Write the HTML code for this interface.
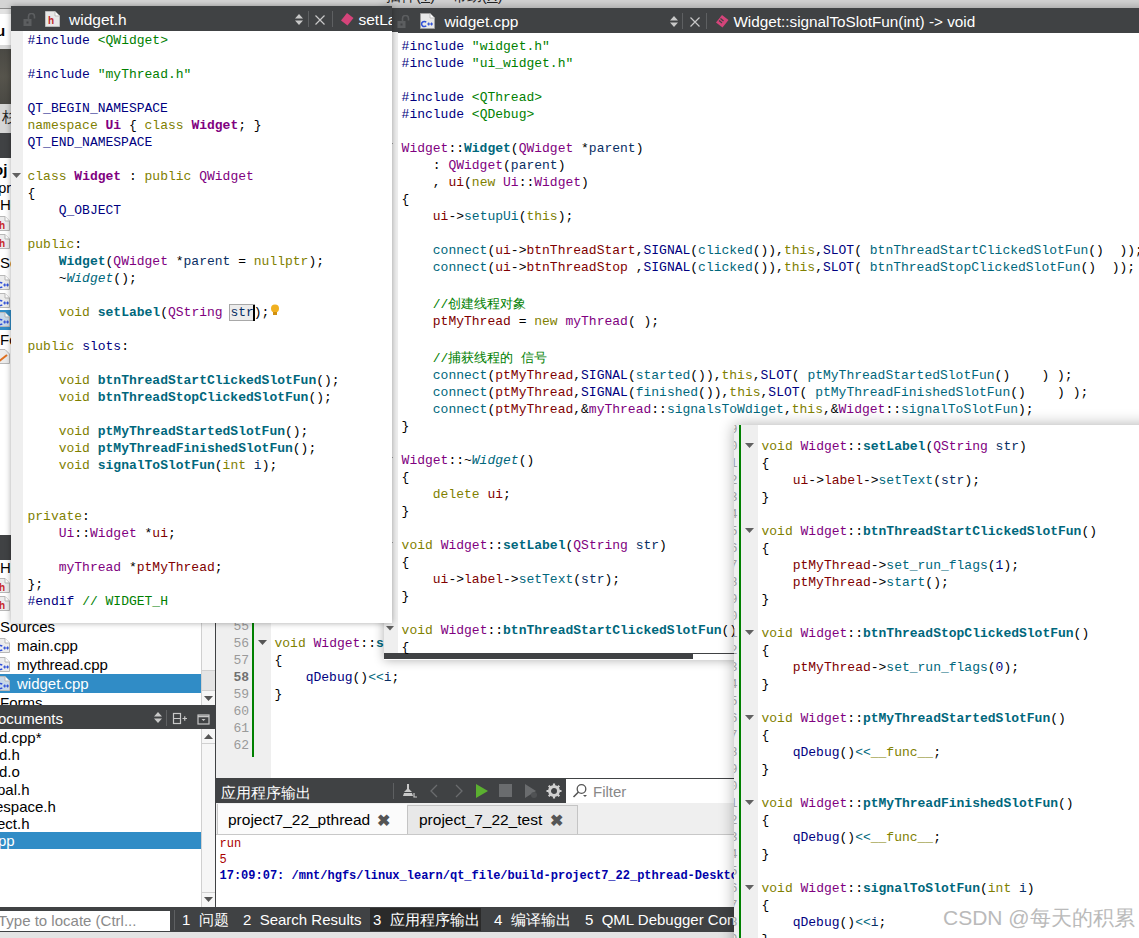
<!DOCTYPE html>
<html><head><meta charset="utf-8">
<style>
*{margin:0;padding:0;box-sizing:border-box}
html,body{width:1139px;height:938px;overflow:hidden;background:#fff}
body{position:relative;font-family:"Liberation Sans",sans-serif}
.a{position:absolute}
.code{font-family:"Liberation Mono",monospace;font-size:13px;line-height:17px;color:#000}
.code div{height:17px;white-space:pre}
.code div.cj{height:20px;padding-top:3px}
.pp{color:#000080}.s{color:#008000}.k{color:#808000}.t{color:#800080}.tb{color:#800080;font-weight:bold}
.f{color:#00677c}.fb{color:#00677c;font-weight:bold}.fi{color:#00677c;font-style:italic}
.m{color:#800000}.v{color:#092e64}.c{color:#008000}
.ui{font-family:"Liberation Sans",sans-serif;white-space:nowrap}
.title{background:#404244;color:#fff;font-size:15px}
.sh{box-shadow:0 0 6px rgba(0,0,0,.35)}
</style></head><body>
<!-- ============ BACKGROUND QT CREATOR ============ -->
<div class="a" id="bg" style="left:0;top:0;width:1139px;height:938px;background:#fff">
<div class="a" style="left:0;top:0;width:1139px;height:9px;background:#d4d4d4"></div>
<div class="a ui" style="left:386px;top:-13px;font-size:15px;line-height:18px;color:#222">插件(<u>T</u>)&nbsp;&nbsp;&nbsp;&nbsp;帮助(<u>H</u>)</div>
<div class="a" style="left:0;top:8px;width:11px;height:1px;background:#8a8a8a"></div><div class="a" style="left:0;top:9px;width:11px;height:5px;background:#e2e2e2"></div>
<div class="a ui" style="left:-4px;top:22px;font-size:15px;line-height:18px;color:#000;font-weight:bold">u</div>
<div class="a" style="left:0;top:45px;width:11px;height:4px;background:#d8d8d8"></div>
<div class="a" style="left:0;top:49px;width:11px;height:55px;background:linear-gradient(#4a4944,#56544c 50%,#4a4944)"></div>
<div class="a" style="left:0;top:104px;width:11px;height:29px;background:#d6d6d6"></div>
<div class="a ui" style="left:2px;top:108px;font-size:15px;line-height:18px;color:#222;">杉</div>
<div class="a" style="left:0;top:133px;width:11px;height:25px;background:#404244"></div>
<div class="a ui" style="left:-6px;top:161px;font-size:15px;line-height:18px;color:#000;font-weight:bold">oj</div>
<div class="a ui" style="left:-2px;top:179px;font-size:15px;line-height:18px;color:#000;">pr</div>
<div class="a ui" style="left:0px;top:196px;font-size:15px;line-height:18px;color:#000;">He</div>
<svg class="a" style="left:-4px;top:216px" width="14" height="15" viewBox="0 0 14 15"><path d="M0.5 0.5 H9 L13.5 5 V14.5 H0.5 Z" fill="#ececec" stroke="#b8b8b8"/><path d="M9 0.5 V5 H13.5" fill="#fff" stroke="#b8b8b8"/><text x="3" y="12.5" font-family="Liberation Sans" font-weight="bold" font-size="10" fill="#c8282d">h</text></svg>
<svg class="a" style="left:-4px;top:234px" width="14" height="15" viewBox="0 0 14 15"><path d="M0.5 0.5 H9 L13.5 5 V14.5 H0.5 Z" fill="#ececec" stroke="#b8b8b8"/><path d="M9 0.5 V5 H13.5" fill="#fff" stroke="#b8b8b8"/><text x="3" y="12.5" font-family="Liberation Sans" font-weight="bold" font-size="10" fill="#c8282d">h</text></svg>
<div class="a ui" style="left:0px;top:254px;font-size:15px;line-height:18px;color:#000;">So</div>
<svg class="a" style="left:-4px;top:275px" width="14" height="15" viewBox="0 0 14 15"><path d="M0.5 0.5 H9 L13.5 5 V14.5 H0.5 Z" fill="#ececec" stroke="#b8b8b8"/><path d="M9 0.5 V5 H13.5" fill="#fff" stroke="#b8b8b8"/><path d="M6.2 8.3 A2.6 2.6 0 1 0 6.2 11.7" fill="none" stroke="#3050d8" stroke-width="1.5"/><path d="M7.2 10 H10.2 M8.7 8.5 V11.5 M10.2 10 H13 M11.6 8.5 V11.5" stroke="#3050d8" stroke-width="1.1"/></svg>
<svg class="a" style="left:-4px;top:293px" width="14" height="15" viewBox="0 0 14 15"><path d="M0.5 0.5 H9 L13.5 5 V14.5 H0.5 Z" fill="#ececec" stroke="#b8b8b8"/><path d="M9 0.5 V5 H13.5" fill="#fff" stroke="#b8b8b8"/><path d="M6.2 8.3 A2.6 2.6 0 1 0 6.2 11.7" fill="none" stroke="#3050d8" stroke-width="1.5"/><path d="M7.2 10 H10.2 M8.7 8.5 V11.5 M10.2 10 H13 M11.6 8.5 V11.5" stroke="#3050d8" stroke-width="1.1"/></svg>
<div class="a" style="left:0;top:310px;width:11px;height:20px;background:#308cc6"></div>
<svg class="a" style="left:-4px;top:312px" width="14" height="15" viewBox="0 0 14 15"><path d="M0.5 0.5 H9 L13.5 5 V14.5 H0.5 Z" fill="#c8d8e8" stroke="#b8b8b8"/><path d="M9 0.5 V5 H13.5" fill="#fff" stroke="#b8b8b8"/><path d="M6.2 8.3 A2.6 2.6 0 1 0 6.2 11.7" fill="none" stroke="#3050d8" stroke-width="1.5"/><path d="M7.2 10 H10.2 M8.7 8.5 V11.5 M10.2 10 H13 M11.6 8.5 V11.5" stroke="#3050d8" stroke-width="1.1"/></svg>
<div class="a ui" style="left:0px;top:331px;font-size:15px;line-height:18px;color:#000;">Fo</div>
<svg class="a" style="left:-4px;top:349px" width="14" height="15" viewBox="0 0 14 15"><path d="M0.5 0.5 H9 L13.5 5 V14.5 H0.5 Z" fill="#ececec" stroke="#b8b8b8"/><path d="M2 13 L11 6" stroke="#e07020" stroke-width="2"/></svg>
<div class="a" style="left:0;top:535px;width:11px;height:25px;background:#404244"></div>
<div class="a ui" style="left:0px;top:559px;font-size:15px;line-height:18px;color:#000;">He</div>
<svg class="a" style="left:-4px;top:578px" width="14" height="15" viewBox="0 0 14 15"><path d="M0.5 0.5 H9 L13.5 5 V14.5 H0.5 Z" fill="#ececec" stroke="#b8b8b8"/><path d="M9 0.5 V5 H13.5" fill="#fff" stroke="#b8b8b8"/><text x="3" y="12.5" font-family="Liberation Sans" font-weight="bold" font-size="10" fill="#c8282d">h</text></svg>
<svg class="a" style="left:-4px;top:596px" width="14" height="15" viewBox="0 0 14 15"><path d="M0.5 0.5 H9 L13.5 5 V14.5 H0.5 Z" fill="#ececec" stroke="#b8b8b8"/><path d="M9 0.5 V5 H13.5" fill="#fff" stroke="#b8b8b8"/><text x="3" y="12.5" font-family="Liberation Sans" font-weight="bold" font-size="10" fill="#c8282d">h</text></svg>
<div class="a ui" style="left:0px;top:618px;font-size:15px;line-height:18px;color:#000;">Sources</div>
<svg class="a" style="left:-4px;top:638px" width="14" height="15" viewBox="0 0 14 15"><path d="M0.5 0.5 H9 L13.5 5 V14.5 H0.5 Z" fill="#ececec" stroke="#b8b8b8"/><path d="M9 0.5 V5 H13.5" fill="#fff" stroke="#b8b8b8"/><path d="M6.2 8.3 A2.6 2.6 0 1 0 6.2 11.7" fill="none" stroke="#3050d8" stroke-width="1.5"/><path d="M7.2 10 H10.2 M8.7 8.5 V11.5 M10.2 10 H13 M11.6 8.5 V11.5" stroke="#3050d8" stroke-width="1.1"/></svg>
<div class="a ui" style="left:17px;top:637px;font-size:15px;line-height:18px;color:#000;">main.cpp</div>
<svg class="a" style="left:-4px;top:657px" width="14" height="15" viewBox="0 0 14 15"><path d="M0.5 0.5 H9 L13.5 5 V14.5 H0.5 Z" fill="#ececec" stroke="#b8b8b8"/><path d="M9 0.5 V5 H13.5" fill="#fff" stroke="#b8b8b8"/><path d="M6.2 8.3 A2.6 2.6 0 1 0 6.2 11.7" fill="none" stroke="#3050d8" stroke-width="1.5"/><path d="M7.2 10 H10.2 M8.7 8.5 V11.5 M10.2 10 H13 M11.6 8.5 V11.5" stroke="#3050d8" stroke-width="1.1"/></svg>
<div class="a ui" style="left:17px;top:656px;font-size:15px;line-height:18px;color:#000;">mythread.cpp</div>
<div class="a" style="left:0;top:674px;width:201px;height:19px;background:#308cc6"></div>
<svg class="a" style="left:-4px;top:676px" width="14" height="15" viewBox="0 0 14 15"><path d="M0.5 0.5 H9 L13.5 5 V14.5 H0.5 Z" fill="#c8d8e8" stroke="#b8b8b8"/><path d="M9 0.5 V5 H13.5" fill="#fff" stroke="#b8b8b8"/><path d="M6.2 8.3 A2.6 2.6 0 1 0 6.2 11.7" fill="none" stroke="#3050d8" stroke-width="1.5"/><path d="M7.2 10 H10.2 M8.7 8.5 V11.5 M10.2 10 H13 M11.6 8.5 V11.5" stroke="#3050d8" stroke-width="1.1"/></svg>
<div class="a ui" style="left:17px;top:675px;font-size:15px;line-height:18px;color:#fff;">widget.cpp</div>
<div class="a ui" style="left:0px;top:694px;font-size:15px;line-height:18px;color:#000;">Forms</div>
<div class="a" style="left:201px;top:617px;width:14px;height:88px;background:#f6f6f6;border-left:1px solid #d0d0d0"></div>
<div class="a" style="left:202px;top:670px;width:13px;height:21px;background:#e4e4e4;border-top:1px solid #d0d0d0;border-bottom:1px solid #d0d0d0"></div>
<svg class="a" style="left:204px;top:696px" width="9" height="5"><path d="M0 0 H9 L4.5 5 Z" fill="#555"/></svg>
<div class="a" style="left:0;top:705px;width:215px;height:24px;background:#404244"></div>
<div class="a ui" style="left:-2px;top:710px;font-size:15px;line-height:18px;color:#fff;">ocuments</div>
<svg class="a" style="left:154px;top:712px" width="8" height="11" viewBox="0 0 8 11"><path d="M0 4.5 L4 0 L8 4.5 Z M0 6.5 L4 11 L8 6.5 Z" fill="#c8c8c8"/></svg>
<div class="a" style="left:166px;top:710px;width:1px;height:16px;background:#5e6062"></div>
<svg class="a" style="left:172px;top:712px" width="16" height="13" viewBox="0 0 16 13"><rect x="1.5" y="1.5" width="7" height="10" fill="none" stroke="#c8c8c8" stroke-width="1.2"/><path d="M1.5 6.5 H8.5 M10.5 6.5 H15 M12.75 4.25 V8.75" stroke="#c8c8c8" stroke-width="1.2"/></svg>
<svg class="a" style="left:197px;top:714px" width="13" height="11" viewBox="0 0 13 11"><rect x="1" y="1" width="11" height="9" fill="none" stroke="#c8c8c8" stroke-width="1.2"/><path d="M1 2.5 H12" stroke="#c8c8c8" stroke-width="1.5"/><path d="M4.5 5 H8.5 L6.5 7 Z" fill="#c8c8c8"/></svg>
<div class="a ui" style="left:-1px;top:729px;font-size:15px;line-height:18px;color:#000;">d.cpp*</div>
<div class="a ui" style="left:-1px;top:746px;font-size:15px;line-height:18px;color:#000;">d.h</div>
<div class="a ui" style="left:-1px;top:763px;font-size:15px;line-height:18px;color:#000;">d.o</div>
<div class="a ui" style="left:-3px;top:781px;font-size:15px;line-height:18px;color:#000;">pal.h</div>
<div class="a ui" style="left:-5px;top:798px;font-size:15px;line-height:18px;color:#000;">espace.h</div>
<div class="a ui" style="left:-3px;top:815px;font-size:15px;line-height:18px;color:#000;">ect.h</div>
<div class="a" style="left:0;top:832px;width:201px;height:17px;background:#308cc6"></div>
<div class="a ui" style="left:-2px;top:832px;font-size:15px;line-height:18px;color:#fff;">pp</div>
<div class="a" style="left:201px;top:729px;width:14px;height:178px;background:#f6f6f6;border-left:1px solid #d0d0d0"></div>
<div class="a" style="left:202px;top:743px;width:13px;height:150px;border-top:1px solid #d0d0d0;border-bottom:1px solid #d0d0d0"></div>
<svg class="a" style="left:204px;top:734px" width="9" height="5"><path d="M0 5 H9 L4.5 0 Z" fill="#555"/></svg>
<svg class="a" style="left:204px;top:897px" width="9" height="5"><path d="M0 0 H9 L4.5 5 Z" fill="#555"/></svg>
<div class="a" style="left:215px;top:9px;width:1px;height:898px;background:#404244"></div>
<div class="a" style="left:216px;top:9px;width:55px;height:769px;background:#efefef"></div>
<div class="a" style="left:252px;top:9px;width:2px;height:748px;background:#008000"></div>
<div class="a code" style="left:216px;top:617.5px;width:33px;text-align:right;color:#9a9a9a"><div>55</div><div>56</div><div>57</div><div style="color:#707070;font-weight:bold">58</div><div>59</div><div>60</div><div>61</div><div>62</div></div>
<svg class="a" style="left:258px;top:640px" width="9" height="5"><path d="M0 0 H9 L4.5 5 Z" fill="#555"/></svg>
<div class="a code" style="left:274.5px;top:634.5px"><div><span class="k">void</span> <span class="t">Widget</span>::<span class="fb">signalToSlotFun</span>(<span class="k">int</span> <span class="v">i</span>)</div><div>{</div><div>    <span class="pp">qDebug</span>()<span class="f">&lt;&lt;</span><span class="v">i</span>;</div><div>}</div></div>
<div class="a" style="left:216px;top:778px;width:923px;height:25px;background:#404244"></div>
<div class="a ui" style="left:221px;top:783px;font-size:15px;line-height:18px;color:#fff;line-height:20px">应用程序输出</div>
<div class="a" style="left:393px;top:783px;width:1px;height:16px;background:#5e6062"></div>
<svg class="a" style="left:402px;top:783px" width="16" height="16" viewBox="0 0 16 16"><path d="M5 1 L7 1 L7 6 L10 9 L2 9 L5 6 Z" fill="#c8c8c8"/><path d="M2 10 L10 10 L11 13 L1 13 Z" fill="#c8c8c8"/><path d="M12 10 V14 H15" stroke="#c8c8c8" fill="none" stroke-width="1.2"/></svg>
<svg class="a" style="left:429px;top:784px" width="10" height="14" viewBox="0 0 10 14"><path d="M8 1 L2 7 L8 13" stroke="#6a6c6e" fill="none" stroke-width="1.3"/></svg>
<svg class="a" style="left:454px;top:784px" width="10" height="14" viewBox="0 0 10 14"><path d="M2 1 L8 7 L2 13" stroke="#6a6c6e" fill="none" stroke-width="1.3"/></svg>
<svg class="a" style="left:475px;top:783px" width="14" height="16" viewBox="0 0 14 16"><path d="M1 1 L13 8 L1 15 Z" fill="#5bb030"/></svg>
<div class="a" style="left:499px;top:784px;width:13px;height:13px;background:#6a6c6e"></div>
<svg class="a" style="left:524px;top:783px" width="14" height="16" viewBox="0 0 14 16"><path d="M1 1 L12 8 L1 15 Z" fill="#6a6c6e"/><circle cx="10" cy="12" r="3" fill="#505254"/></svg>
<svg class="a" style="left:546px;top:783px" width="16" height="16" viewBox="0 0 16 16"><circle cx="8" cy="8" r="4.5" fill="none" stroke="#d0d0d0" stroke-width="3"/><path d="M8 0.5 V3 M8 13 V15.5 M0.5 8 H3 M13 8 H15.5 M2.7 2.7 L4.5 4.5 M11.5 11.5 L13.3 13.3 M2.7 13.3 L4.5 11.5 M11.5 4.5 L13.3 2.7" stroke="#d0d0d0" stroke-width="2.2"/></svg>
<div class="a" style="left:566px;top:778px;width:573px;height:25px;background:#fff;border-top:1px solid #404244"></div>
<svg class="a" style="left:572px;top:783px" width="16" height="16" viewBox="0 0 16 16"><circle cx="9.5" cy="6" r="4.3" fill="none" stroke="#555" stroke-width="1.3"/><path d="M6.5 9 L1.5 14" stroke="#555" stroke-width="1.6"/><path d="M11 12 H15 L13 14 Z" fill="#555"/></svg>
<div class="a ui" style="left:593px;top:782px;font-size:15px;line-height:18px;color:#888;line-height:20px">Filter</div>
<div class="a" style="left:216px;top:803px;width:923px;height:31px;background:#efefef"></div>
<div class="a" style="left:217px;top:804px;width:190px;height:30px;background:#fbfbfb;border-left:1px solid #c8c8c8"></div>
<div class="a ui" style="left:228px;top:811px;font-size:15.5px;line-height:18px;color:#000;line-height:18px">project7_22_pthread</div>
<div class="a ui" style="left:377px;top:812px;font-size:16px;line-height:18px;color:#555;font-weight:bold">&#10006;</div>
<div class="a" style="left:407px;top:805px;width:171px;height:29px;background:#e8e8e8;border:1px solid #c4c4c4;border-bottom:none"></div>
<div class="a ui" style="left:419px;top:811px;font-size:15.5px;line-height:18px;color:#000;line-height:18px">project_7_22_test</div>
<div class="a ui" style="left:550px;top:812px;font-size:16px;line-height:18px;color:#555;font-weight:bold">&#10006;</div>
<div class="a" style="left:216px;top:834px;width:923px;height:1px;background:#c8c8c8"></div>
<div class="a" style="left:219.5px;top:836px;font-family:'Liberation Mono',monospace;font-size:12px;line-height:16px;white-space:pre"><div style="color:#aa0000">run</div><div style="color:#aa0000">5</div><div style="color:#0000aa;font-weight:bold">17:09:07: /mnt/hgfs/linux_learn/qt_file/build-project7_22_pthread-Desktop_Qt_5_12</div></div>
<div class="a" style="left:0;top:907px;width:1139px;height:25px;background:#404244"></div>
<div class="a" style="left:0;top:911px;width:170px;height:20px;background:#fff"></div>
<div class="a ui" style="left:-2px;top:912px;font-size:15px;line-height:18px;color:#8a8a8a;line-height:18px">Type to locate (Ctrl...</div>
<div class="a" style="left:174px;top:910px;width:1px;height:20px;background:#5e6062"></div>
<div class="a" style="left:370px;top:908px;width:111px;height:23px;background:#2a2a2a"></div>
<div class="a ui" style="left:182px;top:911px;font-size:15px;line-height:18px;color:#fff;line-height:18px">1&nbsp;&nbsp;问题</div>
<div class="a ui" style="left:243px;top:911px;font-size:15px;line-height:18px;color:#fff;line-height:18px">2&nbsp;&nbsp;Search Results</div>
<div class="a ui" style="left:373px;top:911px;font-size:15px;line-height:18px;color:#fff;line-height:18px">3&nbsp;&nbsp;应用程序输出</div>
<div class="a ui" style="left:494px;top:911px;font-size:15px;line-height:18px;color:#fff;line-height:18px">4&nbsp;&nbsp;编译输出</div>
<div class="a ui" style="left:585px;top:911px;font-size:15px;line-height:18px;color:#fff;line-height:18px">5&nbsp;&nbsp;QML Debugger Console</div>
<div class="a" style="left:0;top:932px;width:1139px;height:6px;background:#e4e4e4"></div>
</div>
<!-- ============ CPP WINDOW ============ -->
<div class="a" id="cpp" style="box-shadow:0 0 10px rgba(0,0,0,.32);overflow:hidden;left:384px;top:8px;width:780px;height:652px;background:#fff">
  <div class="a title" style="left:0;top:0;width:760px;height:24.5px"><svg class="a" style="left:13px;top:6.5px" width="13" height="13" viewBox="0 0 13 13"><rect x="0.5" y="6" width="8" height="7" fill="#5c5e60"/><rect x="3.5" y="8.5" width="2" height="2" fill="#404244"/><path d="M5.5 6 V3.5 A3 3 0 0 1 11.5 3.5 V5.5" fill="none" stroke="#5c5e60" stroke-width="1.6"/></svg><svg class="a" style="left:36px;top:4.5px" width="15" height="16" viewBox="0 0 15 16"><path d="M0.5 0.5 H10 L14.5 5 V15.5 H0.5 Z" fill="#e8e8e8" stroke="#a0a0a0"/><path d="M10 0.5 V5 H14.5" fill="#ffffff" stroke="#bdbdbd"/><path d="M6.2 9.3 A2.6 2.6 0 1 0 6.2 12.7" fill="none" stroke="#3050d8" stroke-width="1.5"/><path d="M7.2 11 H10.2 M8.7 9.5 V12.5 M10.2 11 H13 M11.6 9.5 V12.5" stroke="#3050d8" stroke-width="1.1"/></svg><div class="a ui" style="left:60.4px;top:3.5px;font-size:15.5px;line-height:20px;color:#fff">widget.cpp</div><svg class="a" style="left:285.5px;top:8px" width="8" height="11" viewBox="0 0 8 11"><path d="M0 4.5 L4 0 L8 4.5 Z M0 6.5 L4 11 L8 6.5 Z" fill="#c8c8c8"/></svg><div class="a" style="left:298px;top:5px;width:1px;height:16px;background:#5e6062"></div><svg class="a" style="left:305.5px;top:8.5px" width="10" height="10" viewBox="0 0 10 10"><path d="M0.5 0.5 L9.5 9.5 M9.5 0.5 L0.5 9.5" stroke="#c8c8c8" stroke-width="1.2"/></svg><div class="a" style="left:322px;top:5px;width:1px;height:16px;background:#5e6062"></div><svg class="a" style="left:332px;top:7px" width="13" height="13" viewBox="0 0 13 13"><path d="M6 0 L12.5 5 L6.5 12.5 L0 7.5 Z" fill="#d4447a"/><path d="M4.5 3.5 L7.5 6 M3 5.5 L6 8" stroke="#404244" stroke-width="1.3"/></svg><div class="a ui" style="left:349.4px;top:3.5px;font-size:15.3px;line-height:20px;color:#fff">Widget::signalToSlotFun(int) -&gt; void</div></div>
  <div class="a" style="left:0;top:24px;width:14px;height:621px;background:#efefef"></div>
  <div class="a" style="left:0;top:645px;width:309px;height:6px;background:#404244"></div><svg class="a" style="left:2px;top:618px" width="8" height="5" viewBox="0 0 8 5"><path d="M0 0 H8 L4 4.5 Z" fill="#606060"/></svg><div class="a" style="left:309px;top:645px;width:45px;height:6px;background:#fff;border-top:1px solid #404244"></div><svg class="a" style="left:1px;top:135px" width="8" height="5" viewBox="0 0 8 5"><path d="M0 0 H8 L4 4.5 Z" fill="#606060"/></svg><svg class="a" style="left:1px;top:449px" width="8" height="5" viewBox="0 0 8 5"><path d="M0 0 H8 L4 4.5 Z" fill="#606060"/></svg><svg class="a" style="left:1px;top:534px" width="8" height="5" viewBox="0 0 8 5"><path d="M0 0 H8 L4 4.5 Z" fill="#606060"/></svg>
<div class="a code" style="left:17.6px;top:29.5px">
<div><span class="pp">#include</span> <span class="s">"widget.h"</span></div>
<div><span class="pp">#include</span> <span class="s">"ui_widget.h"</span></div>
<div></div>
<div><span class="pp">#include</span> <span class="s">&lt;QThread&gt;</span></div>
<div><span class="pp">#include</span> <span class="s">&lt;QDebug&gt;</span></div>
<div></div>
<div><span class="t">Widget</span>::<span class="fb">Widget</span>(<span class="t">QWidget</span> *<span class="v">parent</span>)</div>
<div>    : <span class="t">QWidget</span>(<span class="v">parent</span>)</div>
<div>    , <span class="m">ui</span>(<span class="k">new</span> <span class="t">Ui</span>::<span class="t">Widget</span>)</div>
<div>{</div>
<div>    <span class="m">ui</span>-&gt;<span class="f">setupUi</span>(<span class="k">this</span>);</div>
<div></div>
<div>    <span class="f">connect</span>(<span class="m">ui</span>-&gt;<span class="m">btnThreadStart</span>,<span class="pp">SIGNAL</span>(<span class="f">clicked</span>()),<span class="k">this</span>,<span class="pp">SLOT</span>( <span class="f">btnThreadStartClickedSlotFun</span>()  ));</div>
<div>    <span class="f">connect</span>(<span class="m">ui</span>-&gt;<span class="m">btnThreadStop</span> ,<span class="pp">SIGNAL</span>(<span class="f">clicked</span>()),<span class="k">this</span>,<span class="pp">SLOT</span>( <span class="f">btnThreadStopClickedSlotFun</span>()  ));</div>
<div></div>
<div class="cj">    <span class="c">//创建线程对象</span></div>
<div>    <span class="m">ptMyThread</span> = <span class="k">new</span> <span class="t">myThread</span>( );</div>
<div></div>
<div class="cj">    <span class="c">//捕获线程的 信号</span></div>
<div>    <span class="f">connect</span>(<span class="m">ptMyThread</span>,<span class="pp">SIGNAL</span>(<span class="f">started</span>()),<span class="k">this</span>,<span class="pp">SLOT</span>( <span class="f">ptMyThreadStartedSlotFun</span>()    ) );</div>
<div>    <span class="f">connect</span>(<span class="m">ptMyThread</span>,<span class="pp">SIGNAL</span>(<span class="f">finished</span>()),<span class="k">this</span>,<span class="pp">SLOT</span>( <span class="f">ptMyThreadFinishedSlotFun</span>()    ) );</div>
<div>    <span class="f">connect</span>(<span class="m">ptMyThread</span>,&amp;<span class="t">myThread</span>::<span class="f">signalsToWdiget</span>,<span class="k">this</span>,&amp;<span class="t">Widget</span>::<span class="f">signalToSlotFun</span>);</div>
<div>}</div>
<div></div>
<div><span class="t">Widget</span>::~<span class="fi">Widget</span>()</div>
<div>{</div>
<div>    <span class="k">delete</span> <span class="m">ui</span>;</div>
<div>}</div>
<div></div>
<div><span class="k">void</span> <span class="t">Widget</span>::<span class="fb">setLabel</span>(<span class="t">QString</span> <span class="v">str</span>)</div>
<div>{</div>
<div>    <span class="m">ui</span>-&gt;<span class="m">label</span>-&gt;<span class="f">setText</span>(<span class="v">str</span>);</div>
<div>}</div>
<div></div>
<div><span class="k">void</span> <span class="t">Widget</span>::<span class="fb">btnThreadStartClickedSlotFun</span>()</div>
<div>{</div>
</div>
</div>

<!-- ============ H WINDOW ============ -->
<div class="a sh" id="hw" style="overflow:hidden;left:11px;top:6px;width:381px;height:617px;background:#fff">
  <div class="a title" style="left:0;top:0;width:381px;height:25px"><svg class="a" style="left:11.5px;top:7px" width="13" height="13" viewBox="0 0 13 13"><rect x="0.5" y="6" width="8" height="7" fill="#5c5e60"/><rect x="3.5" y="8.5" width="2" height="2" fill="#404244"/><path d="M5.5 6 V3.5 A3 3 0 0 1 11.5 3.5 V5.5" fill="none" stroke="#5c5e60" stroke-width="1.6"/></svg><svg class="a" style="left:34px;top:5px" width="15" height="16" viewBox="0 0 15 16"><path d="M0.5 0.5 H10 L14.5 5 V15.5 H0.5 Z" fill="#e8e8e8" stroke="#bdbdbd"/><path d="M10 0.5 V5 H14.5" fill="#ffffff" stroke="#bdbdbd"/><text x="3" y="13" font-family="Liberation Sans" font-weight="bold" font-size="10" fill="#c0282d">h</text></svg><div class="a ui" style="left:58px;top:3.5px;font-size:15.5px;line-height:20px;color:#fff">widget.h</div><svg class="a" style="left:284px;top:8px" width="8" height="11" viewBox="0 0 8 11"><path d="M0 4.5 L4 0 L8 4.5 Z M0 6.5 L4 11 L8 6.5 Z" fill="#c8c8c8"/></svg><div class="a" style="left:296.5px;top:5px;width:1px;height:16px;background:#5e6062"></div><svg class="a" style="left:304px;top:8.5px" width="10" height="10" viewBox="0 0 10 10"><path d="M0.5 0.5 L9.5 9.5 M9.5 0.5 L0.5 9.5" stroke="#c8c8c8" stroke-width="1.2"/></svg><div class="a" style="left:320.5px;top:5px;width:1px;height:16px;background:#5e6062"></div><svg class="a" style="left:330px;top:7px" width="13" height="13" viewBox="0 0 13 13"><path d="M6 0 L12.5 5 L6.5 12.5 L0 7.5 Z" fill="#d4447a"/></svg><div class="a ui" style="left:347.5px;top:3.5px;font-size:15.5px;line-height:20px;color:#fff">setLabel(QString str) -&gt; void</div></div>
  <div class="a" style="left:0;top:25px;width:12px;height:592px;background:#efefef"></div><svg class="a" style="left:0.5px;top:167px" width="9" height="5" viewBox="0 0 9 5"><path d="M0 0 H9 L4.5 5 Z" fill="#606060"/></svg>
<div class="a code" style="left:16.5px;top:26px">
<div><span class="pp">#include</span> <span class="s">&lt;QWidget&gt;</span></div>
<div></div>
<div><span class="pp">#include</span> <span class="s">"myThread.h"</span></div>
<div></div>
<div><span class="pp">QT_BEGIN_NAMESPACE</span></div>
<div><span class="k">namespace</span> <span class="tb">Ui</span> { <span class="k">class</span> <span class="tb">Widget</span>; }</div>
<div><span class="pp">QT_END_NAMESPACE</span></div>
<div></div>
<div><span class="k">class</span> <span class="tb">Widget</span> : <span class="k">public</span> <span class="t">QWidget</span></div>
<div>{</div>
<div>    <span class="pp">Q_OBJECT</span></div>
<div></div>
<div><span class="k">public</span>:</div>
<div>    <span class="fb">Widget</span>(<span class="t">QWidget</span> *<span class="v">parent</span> = <span class="k">nullptr</span>);</div>
<div>    ~<span class="fi">Widget</span>();</div>
<div></div>
<div>    <span class="k">void</span> <span class="fb">setLabel</span>(<span class="t">QString</span> <span class="v" style="outline:1px solid #a8a8a8;background:#ececec;position:relative">str<span class="a" style="right:-1px;top:0;width:2px;height:16px;background:#000"></span></span>);<span style="position:relative"><svg class="a" style="left:1px;top:-1px" width="10" height="12" viewBox="0 0 10 12"><circle cx="5" cy="4.5" r="4" fill="#f0b020"/><rect x="3" y="8" width="4" height="3" fill="#d09010"/></svg></span></div>
<div></div>
<div><span class="k">public</span> <span class="pp">slots</span>:</div>
<div></div>
<div>    <span class="k">void</span> <span class="fb">btnThreadStartClickedSlotFun</span>();</div>
<div>    <span class="k">void</span> <span class="fb">btnThreadStopClickedSlotFun</span>();</div>
<div></div>
<div>    <span class="k">void</span> <span class="fb">ptMyThreadStartedSlotFun</span>();</div>
<div>    <span class="k">void</span> <span class="fb">ptMyThreadFinishedSlotFun</span>();</div>
<div>    <span class="k">void</span> <span class="fb">signalToSlotFun</span>(<span class="k">int</span> <span class="v">i</span>);</div>
<div></div>
<div></div>
<div><span class="k">private</span>:</div>
<div>    <span class="t">Ui</span>::<span class="t">Widget</span> *<span class="m">ui</span>;</div>
<div></div>
<div>    <span class="t">myThread</span> *<span class="m">ptMyThread</span>;</div>
<div>};</div>
<div><span class="pp">#endif</span> <span class="c">// WIDGET_H</span></div>
</div>
</div>

<!-- ============ RIGHT WINDOW ============ -->
<div class="a" id="rw" style="box-shadow:0 0 14px rgba(0,0,0,.32);overflow:hidden;left:734px;top:425px;width:430px;height:530px;background:#fff">
  <div class="a" style="left:0;top:0;width:24px;height:520px;background:#efefef"></div>
  <div class="a code" style="left:-30px;top:-4.5px;width:33.5px;text-align:right;color:#a0a0a0"><div>29</div><div>30</div><div>31</div><div>32</div><div>33</div><div>34</div><div>35</div><div>36</div><div>37</div><div>38</div><div>39</div><div>40</div><div>41</div><div>42</div><div>43</div><div>44</div><div>45</div><div>46</div><div>47</div><div>48</div><div>49</div><div>50</div><div>51</div><div>52</div><div>53</div><div>54</div><div>55</div><div>56</div><div>57</div><div>58</div><div>59</div></div><svg class="a" style="left:11px;top:18px" width="9" height="5" viewBox="0 0 9 5"><path d="M0 0 H9 L4.5 5 Z" fill="#606060"/></svg><svg class="a" style="left:11px;top:103px" width="9" height="5" viewBox="0 0 9 5"><path d="M0 0 H9 L4.5 5 Z" fill="#606060"/></svg><svg class="a" style="left:11px;top:205px" width="9" height="5" viewBox="0 0 9 5"><path d="M0 0 H9 L4.5 5 Z" fill="#606060"/></svg><svg class="a" style="left:11px;top:290px" width="9" height="5" viewBox="0 0 9 5"><path d="M0 0 H9 L4.5 5 Z" fill="#606060"/></svg><svg class="a" style="left:11px;top:375px" width="9" height="5" viewBox="0 0 9 5"><path d="M0 0 H9 L4.5 5 Z" fill="#606060"/></svg><svg class="a" style="left:11px;top:460px" width="9" height="5" viewBox="0 0 9 5"><path d="M0 0 H9 L4.5 5 Z" fill="#606060"/></svg><div class="a" style="left:5px;top:0;width:2px;height:520px;background:#008000"></div>
<div class="a code" style="left:27.5px;top:12.5px">
<div><span class="k">void</span> <span class="t">Widget</span>::<span class="fb">setLabel</span>(<span class="t">QString</span> <span class="v">str</span>)</div>
<div>{</div>
<div>    <span class="m">ui</span>-&gt;<span class="m">label</span>-&gt;<span class="f">setText</span>(<span class="v">str</span>);</div>
<div>}</div>
<div></div>
<div><span class="k">void</span> <span class="t">Widget</span>::<span class="fb">btnThreadStartClickedSlotFun</span>()</div>
<div>{</div>
<div>    <span class="m">ptMyThread</span>-&gt;<span class="f">set_run_flags</span>(<span class="pp">1</span>);</div>
<div>    <span class="m">ptMyThread</span>-&gt;<span class="f">start</span>();</div>
<div>}</div>
<div></div>
<div><span class="k">void</span> <span class="t">Widget</span>::<span class="fb">btnThreadStopClickedSlotFun</span>()</div>
<div>{</div>
<div>    <span class="m">ptMyThread</span>-&gt;<span class="f">set_run_flags</span>(<span class="pp">0</span>);</div>
<div>}</div>
<div></div>
<div><span class="k">void</span> <span class="t">Widget</span>::<span class="fb">ptMyThreadStartedSlotFun</span>()</div>
<div>{</div>
<div>    <span class="pp">qDebug</span>()<span class="f">&lt;&lt;</span><span class="k">__func__</span>;</div>
<div>}</div>
<div></div>
<div><span class="k">void</span> <span class="t">Widget</span>::<span class="fb">ptMyThreadFinishedSlotFun</span>()</div>
<div>{</div>
<div>    <span class="pp">qDebug</span>()<span class="f">&lt;&lt;</span><span class="k">__func__</span>;</div>
<div>}</div>
<div></div>
<div><span class="k">void</span> <span class="t">Widget</span>::<span class="fb">signalToSlotFun</span>(<span class="k">int</span> <span class="v">i</span>)</div>
<div>{</div>
<div>    <span class="pp">qDebug</span>()<span class="f">&lt;&lt;</span><span class="v">i</span>;</div>
<div>}</div>
</div>
</div>
<div class="a ui" style="left:943px;top:905px;font-size:21px;line-height:26px;color:#bababa;text-shadow:1px 1px 0 #fff">CSDN @每天的积累</div>
</body></html>
